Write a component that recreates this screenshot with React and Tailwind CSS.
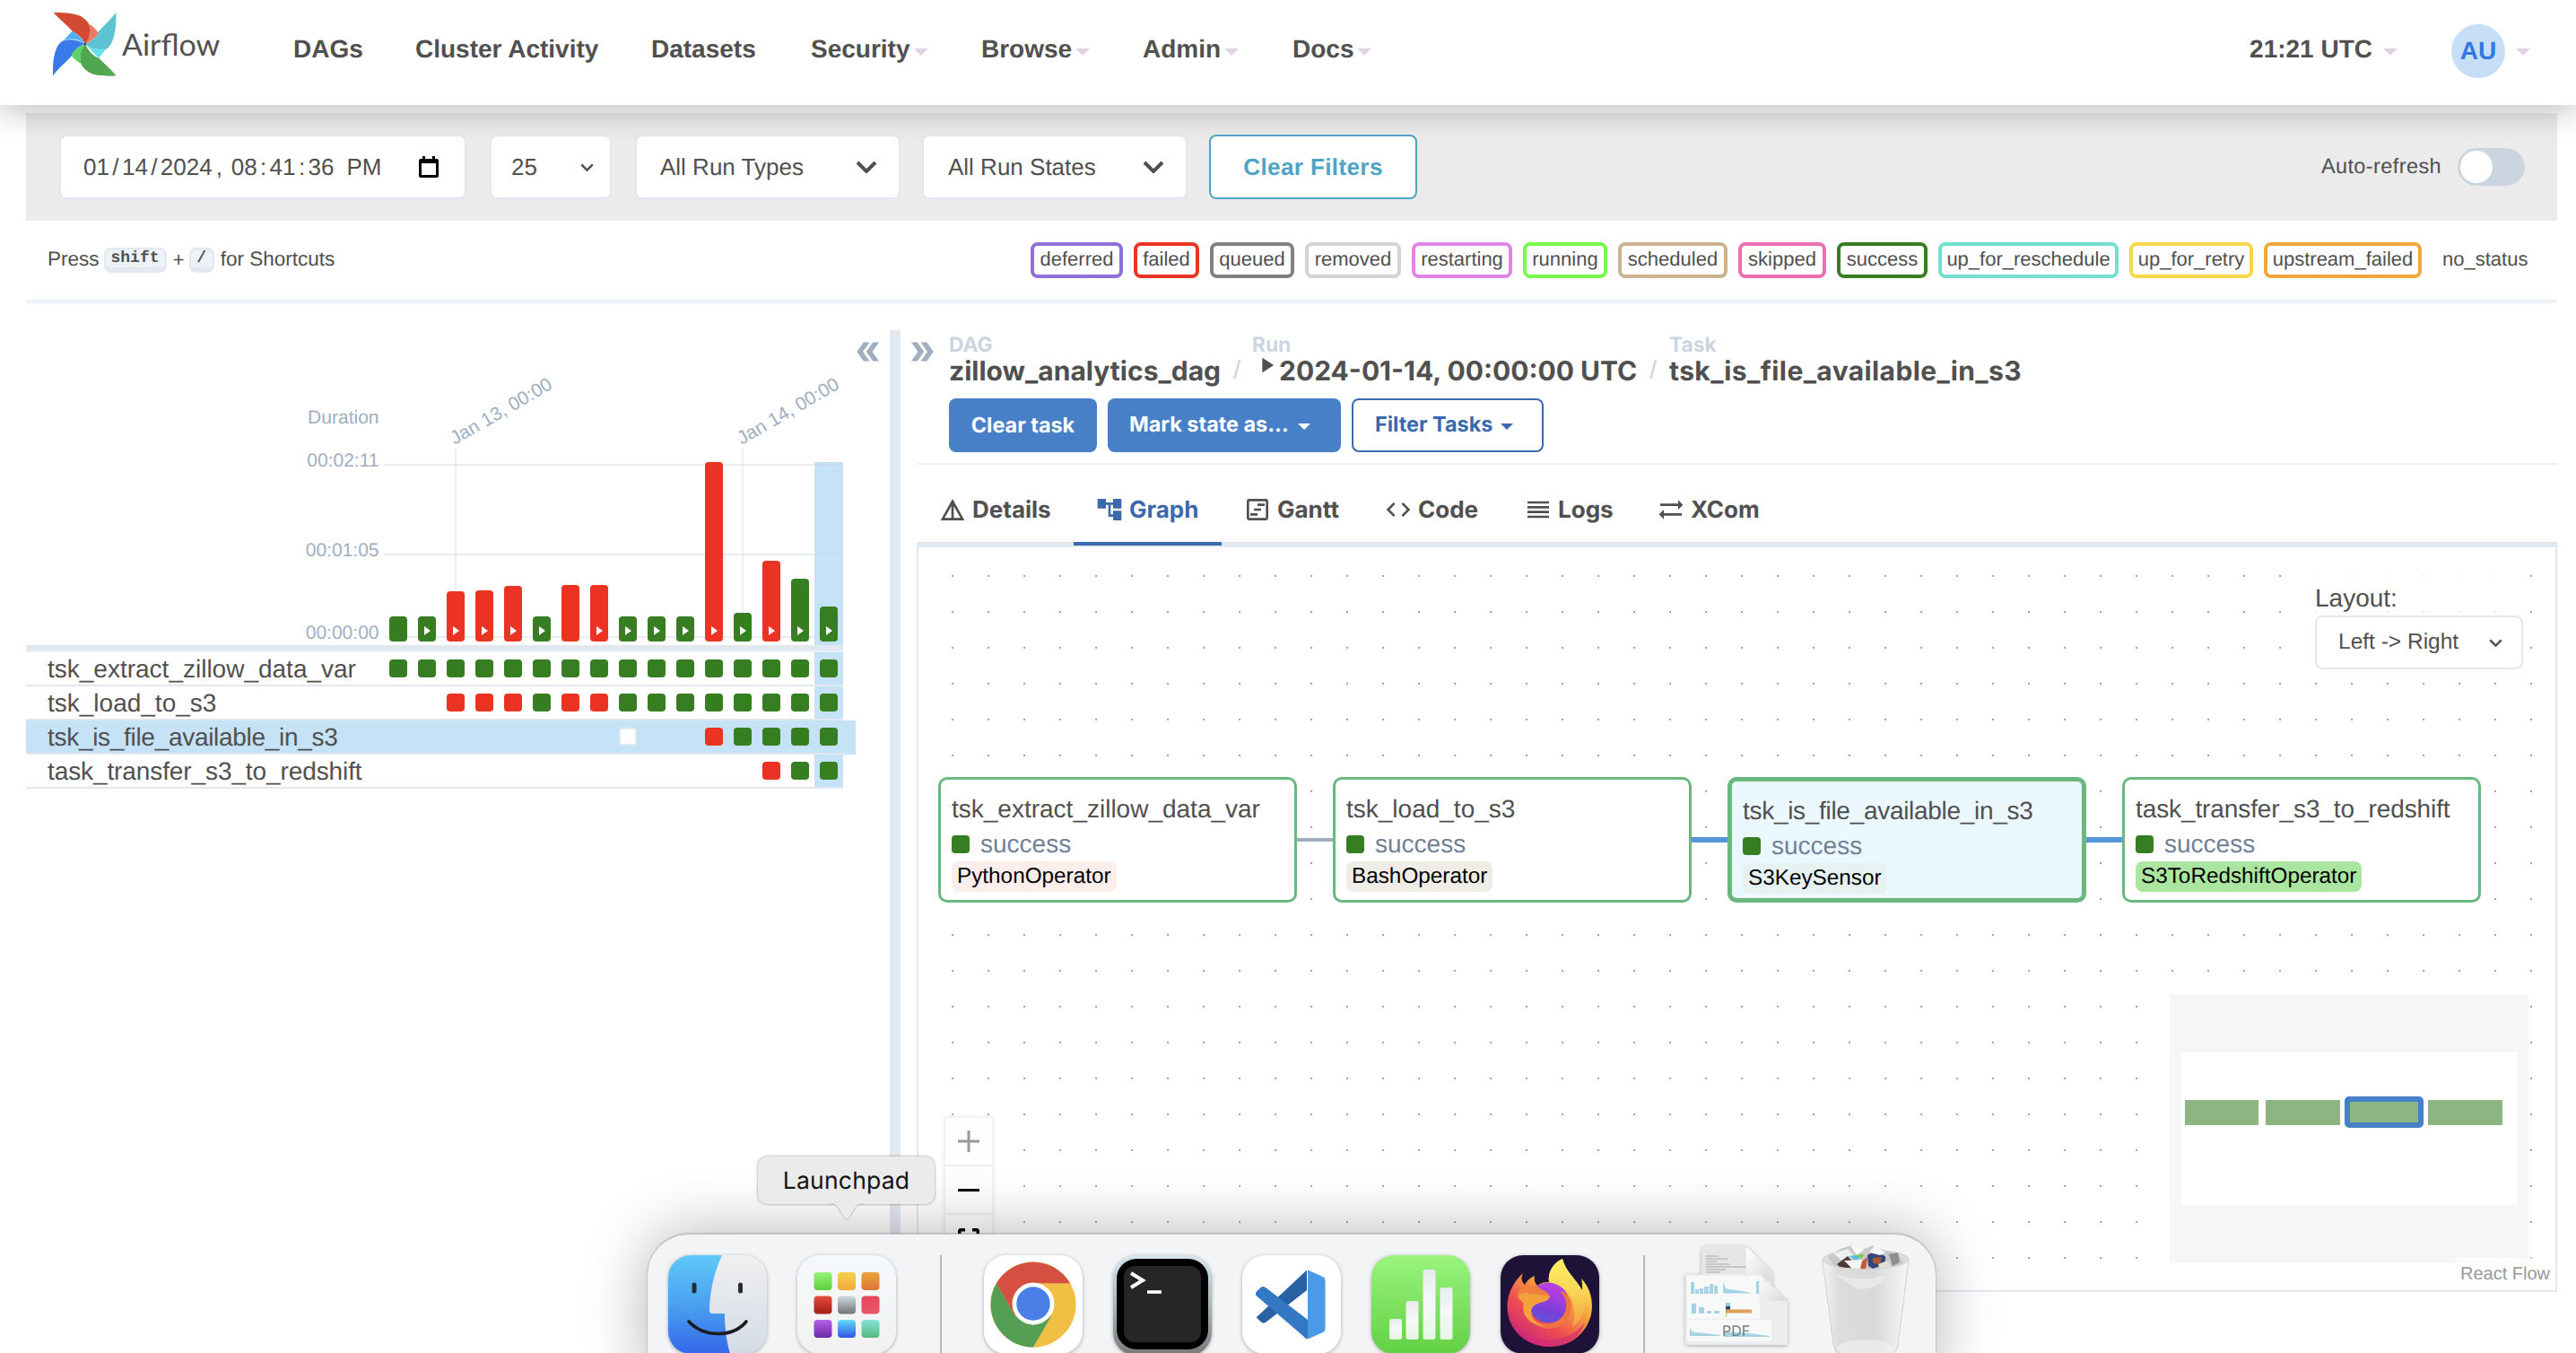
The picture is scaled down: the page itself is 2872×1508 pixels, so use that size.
import React from "react";
import {
  MdDetails,
  MdAccountTree,
  MdOutlineViewTimeline,
  MdCode,
  MdReorder,
  MdSyncAlt,
  MdDoubleArrow,
  MdPlayArrow,
} from "react-icons/md";

const GREEN = "#377e22";
const RED = "#ea3323";

function Caret({ className = "" }) {
  return (
    <svg viewBox="0 0 16 8" className={"shrink-0 " + className} fill="currentColor">
      <path d="M0 0H16L8 8Z" />
    </svg>
  );
}

function Chevron({ className = "" }) {
  return (
    <svg viewBox="0 0 24 14" className={"shrink-0 " + className} fill="none" stroke="currentColor">
      <path d="M2 2L12 12L22 2" strokeWidth="4" />
    </svg>
  );
}

function AirflowLogo() {
  return (
    <svg viewBox="0 0 71 71" className="h-[71px] w-[71px] shrink-0">
      <path d="M70.400 0C71 14 69 36 59 41C50 42 42 40 36 35C44 31 50 27 51 21C57 14 64 8 70.400 0Z" fill="#5ec3d0" />
      <path d="M36 35C42 40 52 42 60 40C56 44 54 48 51 50.500C46 46 41 40 36 35Z" fill="#66dfe9" />
      <path d="M0.500 0C16 0 28 1 34 6C39 10 42 14 41.500 20C41 27 40 31 36 35C32 27 27 24 22 21C16 14 8 8 0.500 0Z" fill="#d24a31" />
      <path d="M41 13C46 16 48 20 51 22C49 28 43 31 36 35C40 29 42 22 41 13Z" fill="#e97b62" />
      <path d="M0 70.600C-0.500 52 2 38 10 32C18 29 28 30 36 35C28 38 22 43 21 48C14 56 6 62 0 70.600Z" fill="#3a7ae8" />
      <path d="M36 35C28 29 18 28 11 32C15 28 19 23 22 20.500C28 25 33 29 36 35Z" fill="#52aef5" />
      <path d="M70.400 70.600C54 71 44 70 38 65C31 60 30 54 30.500 50C31 43 32 39 36 35C39 42 44 48 51 50.500C56 56 64 62 70.400 70.600Z" fill="#51a74f" />
      <path d="M31 57C26 54 23 51 21 48C22 42 29 38 36 35C32 41 30 48 31 57Z" fill="#5ed165" />
      <circle cx="36" cy="35" r="1.500" fill="#51504f" />
    </svg>
  );
}

function NavItem({ label, caret, className }) {
  return (
    <div className={"flex items-center " + className}>
      <span>{label}</span>
      {caret && <Caret className="mt-1.5 ml-1 h-2 w-4 text-[#e1d3e3]" />}
    </div>
  );
}

function Header() {
  return (
    <header className="relative z-10 flex h-[117px] shrink-0 bg-white text-[28px] leading-[32px] font-bold shadow-[0_10px_30px_rgba(0,0,0,0.22)]">
      <div className="flex w-[327px] pt-3.5 pl-[59px]">
        <AirflowLogo />
        <span className="mt-[14px] ml-1.5 font-[Lato] text-[34px] leading-[44px] font-normal">
          Airflow
        </span>
      </div>
      <div className="flex h-[109px] items-center">
        <NavItem label="DAGs" className="w-[136px]" />
        <NavItem label="Cluster Activity" className="w-[263px]" />
        <NavItem label="Datasets" className="w-[178px]" />
        <NavItem label="Security" caret className="w-[190px]" />
        <NavItem label="Browse" caret className="w-[180px]" />
        <NavItem label="Admin" caret className="w-[167px]" />
        <NavItem label="Docs" caret className="w-[120px]" />
      </div>
      <div className="ml-auto flex h-[109px] items-center pr-[51px]">
        <span>21:21 UTC</span>
        <Caret className="mt-1.5 ml-3 h-2 w-4 text-[#e1d3e3]" />
        <div className="mt-[5px] ml-[60px] flex h-[60px] w-[60px] items-center justify-center rounded-full bg-[#c6dff7] text-[#3377e6]">
          AU
        </div>
        <Caret className="mt-1.5 ml-3 h-2 w-4 text-[#e1d3e3]" />
      </div>
    </header>
  );
}

const DATE_PARTS = ["01", "/", "14", "/", "2024", ", ", "08", ":", "41", ":", "36", " ", "PM"];

function FilterBar() {
  return (
    <section className="mt-[9px] ml-[29px] flex h-[120px] w-[2822px] shrink-0 items-center bg-[#ebebeb] pl-[37px] text-[26px]">
      <div className="flex h-[72px] w-[454px] items-center rounded-lg border-2 border-[#e2e8f0] bg-white pl-[25px]">
        {DATE_PARTS.map((p, i) => (
          <span
            key={i}
            className={p === ", " ? "w-[21px] pl-1" : p === " " ? "w-[14px]" : p.length === 1 ? "w-[14px] text-center" : ""}
          >
            {p}
          </span>
        ))}
        <svg viewBox="0 0 22 24" className="ml-[42px] h-6 w-[22px]">
          <path d="M4 0H7V3H15V0H18V3H20A2 2 0 0 1 22 5V22A2 2 0 0 1 20 24H2A2 2 0 0 1 0 22V5A2 2 0 0 1 2 3H4ZM3 8V21H19V8Z" fill="#000" />
        </svg>
      </div>
      <div className="ml-[26px] flex h-[72px] w-[136px] items-center justify-between rounded-lg border-2 border-[#e2e8f0] bg-white pr-[18px] pl-[22px]">
        25
        <Chevron className="h-[9px] w-[15px]" />
      </div>
      <div className="ml-[26px] flex h-[72px] w-[296px] items-center justify-between rounded-lg border-2 border-[#e2e8f0] bg-white pr-[24px] pl-[26px]">
        All Run Types
        <Chevron className="h-[14px] w-[24px]" />
      </div>
      <div className="ml-[24px] flex h-[72px] w-[296px] items-center justify-between rounded-lg border-2 border-[#e2e8f0] bg-white pr-[24px] pl-[27px]">
        All Run States
        <Chevron className="h-[14px] w-[24px]" />
      </div>
      <div className="ml-[24px] flex h-[72px] w-[232px] items-center justify-center rounded-lg border-2 border-[#4fa3c4] bg-white font-bold tracking-[0.4px] text-[#4fa3c4]">
        Clear Filters
      </div>
      <span className="ml-auto text-[23.500px] tracking-[0.4px]">Auto-refresh</span>
      <div className="mr-[36px] ml-[18px] flex h-[42px] w-[75px] items-center rounded-full bg-[#cbd5e0] p-[3px]">
        <div className="h-9 w-9 rounded-full bg-white" />
      </div>
    </section>
  );
}

const STATES = [
  ["deferred", "w-[103px] border-[#8e70d6]"],
  ["failed", "w-[73px] border-[#ea3323]"],
  ["queued", "w-[94px] border-[#808080]"],
  ["removed", "w-[107px] border-[#d3d3d3]"],
  ["restarting", "w-[112px] border-[#e085e6]"],
  ["running", "w-[94px] border-[#75fb4c]"],
  ["scheduled", "w-[122px] border-[#ccb38f]"],
  ["skipped", "w-[98px] border-[#ec6fb1]"],
  ["success", "w-[101px] border-[#377e22]"],
  ["up_for_reschedule", "w-[201px] border-[#74dfcf]"],
  ["up_for_retry", "w-[138px] border-[#f8d749]"],
  ["upstream_failed", "w-[176px] border-[#f2a73b]"],
];

function LegendRow() {
  return (
    <section className="ml-[29px] flex h-[92px] w-[2822px] shrink-0 items-center border-b-4 border-[#edf2f7] pl-[24px] text-[22.500px] leading-[28px]">
      <span className="mb-0.5">Press</span>
      <kbd className="ml-[5px] flex h-7 w-[70px] items-center justify-center rounded-lg border-2 border-b-[6px] border-[#e2e8f0] bg-[#edf2f7] font-['Liberation_Mono'] text-[18px] font-bold">
        shift
      </kbd>
      <span className="ml-[7px]">+</span>
      <kbd className="ml-[5px] flex h-7 w-[28px] items-center justify-center rounded-lg border-2 border-b-[6px] border-[#e2e8f0] bg-[#edf2f7] font-['Liberation_Mono'] text-[18px] font-bold">
        /
      </kbd>
      <span className="mb-0.5 ml-[7px]">for Shortcuts</span>
      <div className="ml-auto flex gap-3 pr-[34px] text-[22px]">
        {STATES.map(([name, cls]) => (
          <span key={name} className={"flex h-10 items-center justify-center rounded-lg border-4 pb-0.5 " + cls}>
            {name}
          </span>
        ))}
        <span className="ml-[11px] flex w-[94px] items-center pb-0.5">no_status</span>
      </div>
    </section>
  );
}

const RUNS = [
  [28, GREEN, false],
  [28, GREEN, true],
  [56, RED, true],
  [57, RED, true],
  [62, RED, true],
  [28, GREEN, true],
  [63, RED, false],
  [63, RED, true],
  [28, GREEN, true],
  [28, GREEN, true],
  [28, GREEN, true],
  [200, RED, true],
  [32, GREEN, true],
  [90, RED, true],
  [70, GREEN, true],
  [39, GREEN, true],
];

function DurationChart() {
  return (
    <svg viewBox="29 338 925 381" className="block h-[381px] w-[925px]" fontSize="21" fill="#a0aec0">
      <g stroke="#e9eef4" strokeWidth="2">
        <path d="M508 499V716M828 499V716" stroke="#edf0f4" />
      </g>
      <rect x="908" y="515" width="32" height="204" fill="#c5e2f7" />
      <g textAnchor="end">
        <text x="422.500" y="472">Duration</text>
        <text x="422.500" y="520">00:02:11</text>
        <text x="422.500" y="620">00:01:05</text>
        <text x="422.500" y="712">00:00:00</text>
      </g>
      <text transform="translate(507 496) rotate(-30)">Jan 13, 00:00</text>
      <text transform="translate(827 496) rotate(-30)">Jan 14, 00:00</text>
      <path d="M428 518H940M428 618H940M428 710H940" stroke="#cbd5e0" strokeOpacity="0.400" strokeWidth="2" />
      {RUNS.map(([h, color, manual], i) => (
        <g key={i}>
          <rect x={434 + i * 32} y={715 - h} width="20" height={h} rx="4" fill={color} />
          {manual && <path d={`M${441 + i * 32} 698L${448 + i * 32} 703L${441 + i * 32} 708Z`} fill="#fff" />}
        </g>
      ))}
    </svg>
  );
}

const TASKS = [
  ["tsk_extract_zillow_data_var", "gggggggggggggggg", ""],
  ["tsk_load_to_s3", "..rrrgrrgggggggg", ""],
  ["tsk_is_file_available_in_s3", "........n..rgggg", "tracking-[-0.3px]"],
  ["task_transfer_s3_to_redshift", ".............rgg", "tracking-[-0.1px]"],
];

const CELL = {
  g: "bg-[#377e22]",
  r: "bg-[#ea3323]",
  n: "bg-white border-2 border-[#e2e8f0]",
  ".": "",
};

function GridPanel() {
  return (
    <div className="relative w-[963px] shrink-0">
      <DurationChart />
      <MdDoubleArrow className="absolute top-[36px] left-[921px] h-9 w-9 rotate-180 text-[#a0aec0]" />
      <div className="h-2 w-[911px] border-b-2 border-[#edf2f7] bg-[#e2e8f0]" />
      {TASKS.map(([name, cells, tracking], r) => (
        <div key={name} className={r === 2 ? "w-[925px] bg-[#c5e2f7]" : "w-[925px]"}>
          <div className="flex h-[38px] w-[911px] border-b-2 border-[#e2e8f0]">
            <span className={"w-[399px] pt-px pl-[24px] text-[28px] leading-[35px] " + tracking}>{name}</span>
            {cells.split("").map((c, i) => (
              <div key={i} className={"flex w-8 items-center justify-center " + (i === 15 ? "bg-[#c5e2f7]" : "")}>
                <div className={"h-5 w-5 rounded " + CELL[c]} />
              </div>
            ))}
          </div>
        </div>
      ))}
    </div>
  );
}

function Crumb({ label, children, className }) {
  return (
    <div className={"font-['Inter'] font-bold " + className}>
      <div className="text-[22.750px] leading-[29px] text-[#cbd5e0]">{label}</div>
      <div className="flex text-[30px] leading-[30px] whitespace-nowrap">{children}</div>
    </div>
  );
}

function Slash({ className }) {
  return <div className={"mt-[28px] text-[29px] leading-[30px] text-[#cbd5e0] " + className}>/</div>;
}

const TABS = [
  [MdDetails, "Details", "w-[175px]"],
  [MdAccountTree, "Graph", "w-[165px]"],
  [MdOutlineViewTimeline, "Gantt", "w-[157px]"],
  [MdCode, "Code", "w-[156px]"],
  [MdReorder, "Logs", "w-[148px]"],
  [MdSyncAlt, "XCom", "w-[166px]"],
];

const NODES = [
  ["tsk_extract_zillow_data_var", "PythonOperator", "left-[22px]", "bg-[#fceeeb]", ""],
  ["tsk_load_to_s3", "BashOperator", "left-[462px]", "bg-[#efede6]", ""],
  ["tsk_is_file_available_in_s3", "S3KeySensor", "left-[902px]", "bg-[#e6f1f2]", "tracking-[-0.3px]"],
  ["task_transfer_s3_to_redshift", "S3ToRedshiftOperator", "left-[1342px]", "bg-[#aae69f]", "tracking-[-0.1px]"],
];

function FlowCanvas() {
  return (
    <div className="relative ml-[18px] h-[830px] w-[1829px] border-2 border-t-0 border-[#e2e8f0] bg-[conic-gradient(from_270deg_at_2px_2px,#a8a8a8_90deg,transparent_0)] bg-[length:40px_40px] bg-[position:37px_31px]">
      <div className="absolute top-[324px] left-[420px] h-1 w-[44px] bg-[#a0aec0]" />
      <div className="absolute top-[323px] left-[860px] h-1.5 w-[44px] bg-[#5896dc]" />
      <div className="absolute top-[323px] left-[1300px] h-1.5 w-[44px] bg-[#5896dc]" />
      {NODES.map(([name, op, pos, chip, tracking], i) => (
        <div
          key={name}
          className={
            "absolute top-[256px] h-[140px] w-[400px] rounded-[10px] border-[#6ab77f] " +
            (i === 2 ? "border-[5px] bg-[#ebf8ff] px-3 pt-[16px] " : "border-[3px] bg-white px-3 pt-[16px] ") +
            pos
          }
        >
          <div className={"text-[28px] leading-[34px] " + tracking}>{name}</div>
          <div className="mt-[6px] flex h-[32px] items-center text-[28px] text-[#718096]">
            <div className="mr-[12px] h-5 w-5 rounded bg-[#377e22]" />
            success
          </div>
          <div className={"mt-[3px] flex h-[34px] w-fit items-center rounded-lg px-[6px] pt-px text-[24.300px] text-black " + chip}>{op}</div>
        </div>
      ))}
      <div className="absolute top-[30px] left-[1557px] w-[232px] bg-white/80">
        <div className="pt-[9px] text-[28px] leading-[36px]">Layout:</div>
        <div className="mt-px flex h-[60px] items-center justify-between rounded-lg border-2 border-[#e2e8f0] bg-white pr-[21px] pl-[24px] text-[24.500px]">
          Left -&gt; Right
          <Chevron className="h-[9px] w-[15px]" />
        </div>
      </div>
      <div className="absolute top-[636px] left-[30px] w-[52px] bg-[#fefefe] shadow-[0_0_4px_2px_rgba(0,0,0,0.08)]">
        <div className="flex h-[54px] items-center justify-center border-b-2 border-[#eee]">
          <svg viewBox="0 0 24 24" className="h-6 w-6" stroke="#999" strokeWidth="3">
            <path d="M12 0V24M0 12H24" />
          </svg>
        </div>
        <div className="flex h-[54px] items-center justify-center border-b-2 border-[#eee]">
          <div className="h-[3px] w-6 bg-black" />
        </div>
        <div className="flex h-[54px] items-center justify-center">
          <svg viewBox="0 0 24 24" className="h-6 w-6" fill="none" stroke="#000" strokeWidth="3.500">
            <path d="M1.700 8V3.500A1.800 1.800 0 0 1 3.500 1.700H8M16 1.700H20.500A1.800 1.800 0 0 1 22.300 3.500V8M1.700 16V22.300H8M16 22.300H22.300V16" />
          </svg>
        </div>
      </div>
      <svg viewBox="2419 1108 400 300" className="absolute top-[498px] left-[1395px] h-[300px] w-[400px]">
        <rect x="2419" y="1108" width="400" height="300" fill="#f6f6f6" />
        <rect x="2431.500" y="1173" width="375" height="170" fill="#fff" />
        <rect x="2436" y="1226" width="82" height="28" fill="#8cb582" />
        <rect x="2526" y="1226" width="83" height="28" rx="1" fill="#8cb582" />
        <rect x="2617" y="1225" width="82" height="29" rx="2" fill="#8cb582" stroke="#4780c7" strokeWidth="6" />
        <rect x="2707" y="1226" width="83" height="28" rx="1" fill="#8cb582" />
      </svg>
      <div className="absolute top-[792px] left-[1713px] flex h-[36px] w-[112px] items-center justify-center bg-white/50 text-[20px] text-[#999]">
        React Flow
      </div>
    </div>
  );
}

function DetailsPanel() {
  return (
    <div className="w-[1847px] shrink-0">
      <div className="flex h-[178px]">
        <div className="w-[54px] pt-[36px] pl-[6px]">
          <MdDoubleArrow className="h-9 w-9 text-[#a0aec0]" />
        </div>
        <div className="pt-[32px]">
          <div className="flex h-[58px]">
            <Crumb label="DAG" className="w-[317px]">zillow_analytics_dag</Crumb>
            <Slash className="w-[21px]" />
            <Crumb label="Run" className="w-[443px]">
              <MdPlayArrow className="mt-[-6px] ml-[2px] h-[28px] w-[28px]" />
              <span>2024-01-14, 00:00:00 UTC</span>
            </Crumb>
            <Slash className="w-[22px]" />
            <Crumb label="Task">
              <span className="tracking-[0.4px]">tsk_is_file_available_in_s3</span>
            </Crumb>
          </div>
          <div className="mt-4 flex gap-3 font-['Inter'] text-[23.400px] font-bold text-white">
            <div className="flex h-[60px] w-[165px] items-center justify-center rounded-lg bg-[#4780c7]">Clear task</div>
            <div className="flex h-[60px] w-[260px] items-center rounded-lg bg-[#4780c7] pb-0.5 pl-[24px]">
              Mark state as…
              <Caret className="mt-1 ml-[10px] h-[7px] w-[14px]" />
            </div>
            <div className="flex h-[60px] w-[214px] items-center rounded-lg border-2 border-[#3c69ad] bg-white pb-0.5 pl-[24px] text-[#3c69ad]">
              Filter Tasks
              <Caret className="mt-1 ml-[9px] h-[7px] w-[14px]" />
            </div>
          </div>
        </div>
      </div>
      <div className="ml-[18px] h-0.5 bg-[#edf2f7]" />
      <div className="ml-[18px] flex h-[92px] border-b-[6px] border-[#e2e8f0] font-['Inter'] text-[26px] font-bold">
        {TABS.map(([Icon, label, w]) => (
          <div
            key={label}
            className={
              "flex items-center gap-1.5 pt-[14px] pl-[24px] " +
              w +
              (label === "Graph" ? " mb-[-4px] border-b-4 border-[#3c69ad] text-[#3c69ad]" : "")
            }
          >
            <Icon className="h-8 w-8 shrink-0" />
            {label}
          </div>
        ))}
      </div>
      <FlowCanvas />
    </div>
  );
}

function Grad({ id, stops, x2 = 0, y2 = 1 }) {
  return (
    <linearGradient id={id} x1="0" y1="0" x2={x2} y2={y2}>
      {stops.map((c, i) => (
        <stop key={i} offset={i / (stops.length - 1)} stopColor={c} />
      ))}
    </linearGradient>
  );
}

function Tile({ children, className = "" }) {
  return (
    <svg
      viewBox="0 0 110 110"
      className={"h-[110px] w-[110px] shrink-0 overflow-visible drop-shadow-[0_1px_2px_rgba(0,0,0,0.3)] " + className}
    >
      {children}
    </svg>
  );
}

function Finder() {
  return (
    <Tile>
      <defs>
        <Grad id="fdBlue" stops={["#60c9f8", "#4aa0f1", "#3468ea"]} />
        <Grad id="fdGray" stops={["#f0f0f0", "#d3dbe6"]} />
        <clipPath id="fdClip">
          <rect width="110" height="110" rx="25" />
        </clipPath>
      </defs>
      <g clipPath="url(#fdClip)">
        <rect width="110" height="110" fill="url(#fdGray)" />
        <path d="M0 0H60C50 22 46 44 46 62Q46 65 49 65H63C63 82 65 96 69 110H0Z" fill="url(#fdBlue)" />
      </g>
      <path d="M29 33V40M80.500 33V40" stroke="#2c2c2c" strokeWidth="5" strokeLinecap="round" />
      <path d="M23 74C40 92 72 92 87 74" fill="none" stroke="#1c1c1c" strokeWidth="3.600" strokeLinecap="round" />
    </Tile>
  );
}

const PADS = [
  ["#98f277", "#5dcf3d"],
  ["#f6d04c", "#efaa3a"],
  ["#eda23b", "#dd7536"],
  ["#e84c3b", "#a51e16"],
  ["#cfdbe3", "#737373"],
  ["#e9445b", "#e65a66"],
  ["#b661e8", "#6c29a8"],
  ["#65dcfa", "#2d54e3"],
  ["#84e2dc", "#55b97d"],
];

function Launchpad() {
  return (
    <Tile>
      <defs>
        <Grad id="lpBg" stops={["#f6f9fc", "#f1f1f0"]} />
        {PADS.map((p, i) => (
          <Grad key={i} id={"lp" + i} stops={p} />
        ))}
      </defs>
      <rect width="110" height="110" rx="25" fill="url(#lpBg)" />
      {PADS.map((p, i) => (
        <rect key={i} x={18.500 + (i % 3) * 26.500} y={19 + Math.floor(i / 3) * 26.500} width="20" height="20" rx="4" fill={`url(#lp${i})`} />
      ))}
    </Tile>
  );
}

function Chrome() {
  return (
    <Tile>
      <rect width="110" height="110" rx="25" fill="#fff" />
      <circle cx="55" cy="55" r="47.500" fill="#f2bf45" />
      <path d="M55 102.500A47.500 47.500 0 0 1 13.900 31.200L34.500 67L55 78L75.500 67Z" fill="#549f54" />
      <path d="M13.900 31.250A47.500 47.500 0 0 1 96.100 31.250H55L34.500 67Z" fill="#d65042" />
      <circle cx="55" cy="54" r="23.500" fill="#fff" />
      <circle cx="55" cy="54" r="18.700" fill="#4a7fe8" />
    </Tile>
  );
}

function Terminal() {
  return (
    <Tile>
      <defs>
        <Grad id="tmRim" stops={["#d5e6ee", "#a9b4b9", "#787878"]} />
      </defs>
      <rect width="110" height="112" rx="26" fill="url(#tmRim)" />
      <rect x="4" y="4" width="102" height="101" rx="22" fill="#000" />
      <rect x="12" y="12" width="86" height="85" rx="12" fill="#262626" />
      <path d="M20 20L33 28L20 36" fill="none" stroke="#fff" strokeWidth="4" />
      <path d="M38 41H54" stroke="#fff" strokeWidth="3.600" />
    </Tile>
  );
}

function VSCode() {
  return (
    <Tile>
      <rect width="110" height="110" rx="25" fill="#fff" />
      <path d="M16 69L72 16.500V39L26 75Q23 76.500 21 74.500L16 69.500Z" fill="#2862a4" />
      <path d="M16 40.500L20.500 36Q23 34 26 36L73 72V93Q71 94 69 91L15.500 45Q14 43 16 40.500Z" fill="#3378c5" />
      <path d="M73 16.500L90 24Q92.500 25 92.500 28V82Q92.500 85 90 86L73 93.500Z" fill="#4b9ae8" />
    </Tile>
  );
}

function Numbers() {
  return (
    <Tile>
      <defs>
        <Grad id="nbBg" stops={["#9bf47e", "#62d043"]} />
        <Grad id="nbBar" stops={["#e8ecee", "#f6f8f9", "#e6f6e0"]} />
      </defs>
      <rect width="110" height="110" rx="25" fill="url(#nbBg)" />
      <g fill="url(#nbBar)">
        <rect x="20" y="71" width="14" height="23" rx="2.500" />
        <rect x="38.500" y="51" width="14" height="43" rx="2.500" />
        <rect x="57.500" y="16" width="14" height="78" rx="2.500" />
        <rect x="76.500" y="36" width="14" height="58" rx="2.500" />
      </g>
    </Tile>
  );
}

function Firefox() {
  return (
    <Tile>
      <defs>
        <linearGradient id="ffBody" x1="0.850" y1="0.100" x2="0.250" y2="0.950">
          <stop offset="0.100" stopColor="#fbe55c" />
          <stop offset="0.400" stopColor="#f4a13c" />
          <stop offset="0.700" stopColor="#ee4f50" />
          <stop offset="1" stopColor="#cf2a78" />
        </linearGradient>
        <Grad id="ffGlobe" stops={["#b23fe0", "#7b3fd8", "#4f5fd6"]} x2={-0.3} />
        <Grad id="ffFlame" stops={["#fdf066", "#f8d455", "#f3a043"]} />
      </defs>
      <rect width="110" height="110" rx="25" fill="#1e1238" />
      <path d="M25 20C22 26 24 30 27 33C30 27 34 25 38 23C37 27 38 31 41 34C46 30 50 30 54 30C52 18 60 8 69 4C72 18 84 26 91 39C91 33 91 29 90 26C100 36 104 52 101 66C96 88 77 102 55 102C30 102 8 84 7.500 58C7 42 16 28 25 20Z" fill="url(#ffBody)" />
      <path d="M8 62C14 84 36 97 60 94C76 92 88 84 94 74C90 91 74 102 55 102C32 102 10 88 8 62Z" fill="#cf2a78" opacity="0.600" />
      <circle cx="54" cy="53" r="22.500" fill="url(#ffGlobe)" />
      <path d="M54 30C52 18 60 8 69 4C72 18 86 28 92 42C97 58 90 74 80 80C86 62 80 46 74 42C70 36 62 31 54 30Z" fill="url(#ffFlame)" />
      <path d="M66 40C78 42 82 56 77 66C72 77 62 82 54 82C48 82 40 78 37 73C44 77 54 78 62 74C74 68 78 52 66 40Z" fill="#f0743f" />
      <path d="M19 45C24 41 31 42 37 43C44 42 50 43 55 46C53 52 46 52 41 54C35 57 33 60 35 68C38 74 44 78 50 79C34 80 22 66 26 54C24 51 20 49 19 45Z" fill="#f4a13c" />
      <path d="M27 33C35 33 41 34 45 38C51 40 55 44 55 46C48 44 42 44 37 43C30 42 24 40 19 45C19 40 22 36 27 33Z" fill="#f2803c" />
    </Tile>
  );
}

function PdfStack() {
  return (
    <svg viewBox="0 0 118 114" className="mt-[-11px] h-[114px] w-[118px] shrink-0 drop-shadow-[0_1px_2px_rgba(0,0,0,0.3)]">
      <defs>
        <Grad id="pdFold" stops={["#ffffff", "#d9d9d9"]} x2={1} />
      </defs>
      <path d="M22 1H69L98 30V70H19V6Z" fill="#e6e6e6" />
      <path d="M69 1L93 25Q96 30 98 40L84 40L69 34Z" fill="url(#pdFold)" />
      <path d="M24 12H38M24 15H48M24 18H36M24 21H50M24 24H69M24 27H46M24 30H40" stroke="#a8a8a8" strokeWidth="1" />
      <path d="M2 32H84L115 62V108Q115 111 112 111H4Q1 111 1 108V34Z" fill="#ededed" />
      <path d="M3 34H83V60H3ZM3 60H84V82H3ZM3 83H97V107H3Z" fill="#f7f8f8" />
      <path d="M7 41H11V54H7ZM12 49H16V54H12ZM17 48H21V54H17ZM22 46H27V54H22ZM28 43H32V54H28ZM33 45H37V54H33ZM8 65H13V76H8ZM16 69H22V76H16ZM25 73H30V76H25ZM33 73H39V76H33ZM80 40H83V54H80Z" fill="#a5d3e6" />
      <path d="M43 39Q44 49 50 49Q62 50 74 53V53.500H43ZM6 90Q7 97 12 97Q26 98 40 100V101H6ZM44 96Q70 97 95 101V102H44Z" fill="#a5d3e6" />
      <rect x="46" y="64" width="5" height="4" fill="#8ccbe4" />
      <rect x="46" y="68" width="5" height="4" fill="#294866" />
      <rect x="46" y="71.500" width="29" height="4" fill="#dfa05a" />
      <rect x="46" y="75.500" width="1.500" height="4" fill="#b9d96a" />
      <path d="M84 32Q86 40 98 46L115 62H87Q84 62 84 59Z" fill="url(#pdFold)" />
      <text x="42" y="101" fontSize="16" fontFamily="Inter, sans-serif" fill="#7a7a7a">PDF</text>
    </svg>
  );
}

function Trash() {
  return (
    <svg viewBox="0 0 100 124" className="mt-[-12px] h-[124px] w-[100px] shrink-0">
      <defs>
        <linearGradient id="trBody" x1="0" y1="0" x2="1" y2="0">
          <stop offset="0" stopColor="#f4f5f6" />
          <stop offset="0.180" stopColor="#dcdcdc" />
          <stop offset="0.600" stopColor="#d9d9da" />
          <stop offset="1" stopColor="#f6f7f8" />
        </linearGradient>
      </defs>
      <ellipse cx="50" cy="17" rx="48" ry="11" fill="#dcdddd" stroke="#c9cbcd" />
      <path d="M8 14L22 5L34 1L46 6L58 1L72 7L86 10L92 20L84 27H16Z" fill="#c9c9c9" />
      <path d="M14 10L30 5L38 14L26 20Z" fill="#efefef" />
      <path d="M33 1L48 6L40 12Z" fill="#ffffff" />
      <path d="M18 22L30 13L42 26H22Z" fill="#4a3a38" />
      <path d="M31 13L47 11L40 18Z" fill="#52bfe6" />
      <path d="M38 12L48 11L46 16Z" fill="#86cc42" />
      <path d="M26 18L46 17L44 27L36 28Z" fill="#f4f4f4" />
      <path d="M46 19L52 14L50 28H44Z" fill="#c4593a" />
      <path d="M52 12L58 8L72 13L72 22L58 27L53 24Z" fill="#36457c" />
      <path d="M58 15L68 14L66 22L58 21Z" fill="#a75a34" />
      <path d="M54 9L60 1L72 9L66 12Z" fill="#f6f6f6" />
      <path d="M76 11L86 9L88 20L80 24Z" fill="#8e8e8e" />
      <path d="M64 22L74 18L80 26L66 28Z" fill="#e2ddd6" />
      <path d="M2 18C16 31 84 31 98 18L86 112Q84 124 74 124H26Q16 124 14 112Z" fill="url(#trBody)" stroke="#cfd1d3" />
      <path d="M14 32C30 40 54 40 74 34C66 48 50 52 38 48Z" fill="#ececec" opacity="0.800" />
      <ellipse cx="50" cy="116" rx="32" ry="10" fill="#efeff0" opacity="0.700" />
    </svg>
  );
}

function Dock() {
  return (
    <div className="absolute top-[1375px] left-[722px] z-20 flex h-[180px] w-[1436px] rounded-[46px] border-t border-[#c4c4c4] bg-[#f3f4f6] pt-[23px] pl-[23px] shadow-[0_0_70px_rgba(0,0,0,0.3),0_0_2px_rgba(0,0,0,0.4)]">
      <div className="flex gap-[34px]">
        <Finder />
        <Launchpad />
      </div>
      <div className="mr-[47px] ml-[49px] w-0.5 bg-[#b9babc]" />
      <div className="flex gap-[34px]">
        <Chrome />
        <Terminal />
        <VSCode />
        <Numbers />
        <Firefox />
      </div>
      <div className="mr-[44px] ml-[49px] w-0.5 bg-[#b9babc]" />
      <PdfStack />
      <div className="w-[34px]" />
      <Trash />
    </div>
  );
}

function DockTooltip() {
  return (
    <div className="absolute top-[1289px] left-[845px] z-30 flex h-[53px] w-[197px] justify-center rounded-[10px] bg-[#ebebec] font-[Inter] text-[26.500px] leading-[54px] tracking-[0.200px] text-[#141414] shadow-[0_0_3px_rgba(0,0,0,0.45)]">
      Launchpad
      <svg viewBox="0 0 36 20" className="absolute top-[52px] left-[81px] h-5 w-9">
        <path d="M0 0C8 1 8 6 15 16Q18 20 21 16C28 6 28 1 36 0Z" fill="#ebebec" />
        <path d="M0 1C8 1 8 6 15 16Q18 20 21 16C28 6 28 1 36 1" fill="none" stroke="#b9b9b9" />
      </svg>
    </div>
  );
}

export default function App() {
  return (
    <div className="relative flex h-[1508px] w-[2872px] flex-col overflow-hidden bg-white font-['Liberation_Sans',Arial,sans-serif] text-[#51504f] [text-rendering:geometricPrecision]">
      <Header />
      <FilterBar />
      <LegendRow />
      <main className="flex flex-1 pl-[29px]">
        <GridPanel />
        <div className="mt-[30px] w-3 shrink-0 bg-[#e2e8f0]" />
        <DetailsPanel />
      </main>
      <Dock />
      <DockTooltip />
    </div>
  );
}
